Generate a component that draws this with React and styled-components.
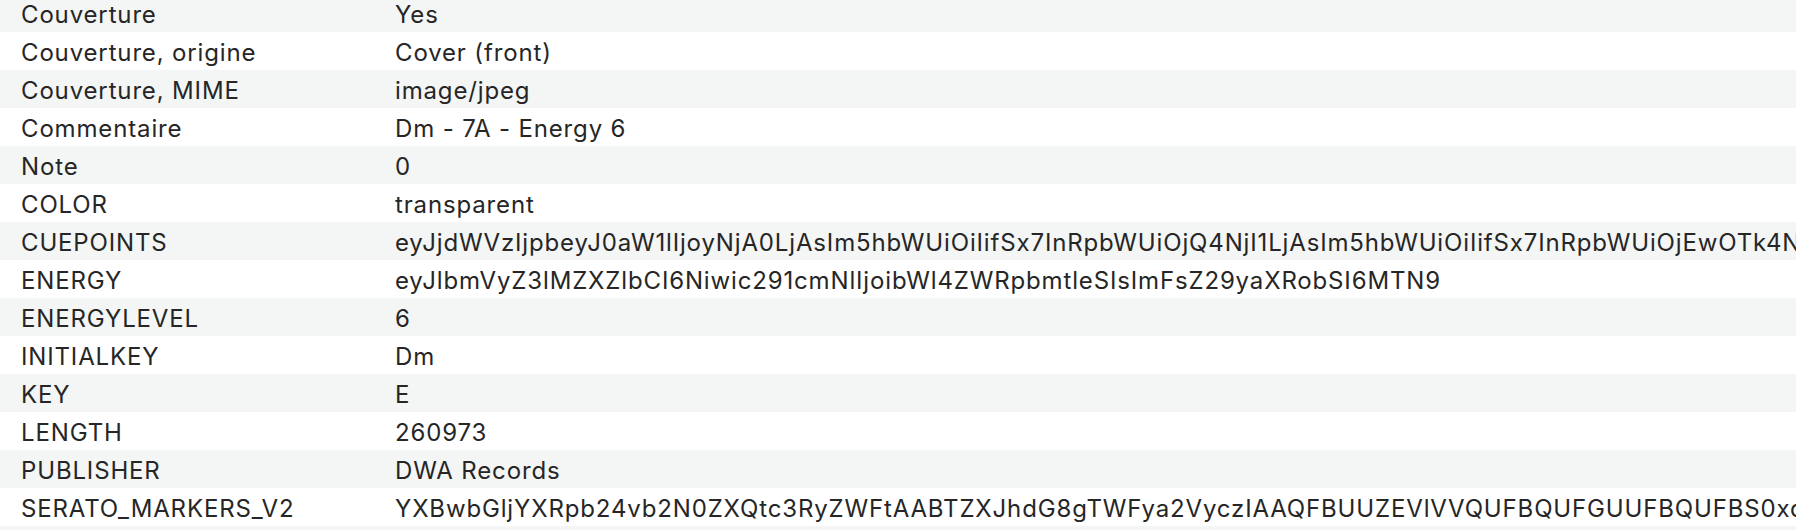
import React from 'react';
import styled, { createGlobalStyle } from 'styled-components';

const GlobalStyle = createGlobalStyle`
  html, body {
    margin: 0;
    padding: 0;
    background: #ffffff;
    overflow: hidden;
  }
`;

const Table = styled.div`
  display: flex;
  flex-direction: column;
  margin-top: -6px;
  width: 100%;
  font-family: Inter, "Noto Sans", sans-serif;
  font-size: 24px;
  letter-spacing: 0.85px;
  color: #262626;
`;

const Row = styled.div`
  box-sizing: border-box;
  display: grid;
  grid-template-columns: 374px 1fr;
  align-items: center;
  height: 38px;
  padding: 3px 0 0 21px;
  background: ${(props) => (props.$striped ? '#f4f5f5' : '#ffffff')};
  white-space: nowrap;
  overflow: hidden;
`;

const Label = styled.span`
  overflow: hidden;
`;

const Value = styled.span`
  overflow: hidden;
`;

const rows = [
  ['Couverture', 'Yes'],
  ['Couverture, origine', 'Cover (front)'],
  ['Couverture, MIME', 'image/jpeg'],
  ['Commentaire', 'Dm - 7A - Energy 6'],
  ['Note', '0'],
  ['COLOR', 'transparent'],
  ['CUEPOINTS', 'eyJjdWVzIjpbeyJ0aW1lIjoyNjA0LjAsIm5hbWUiOiIifSx7InRpbWUiOjQ4NjI1LjAsIm5hbWUiOiIifSx7InRpbWUiOjEwOTk4NS4wLCJuYW1lIjoiIn1dfQ=='],
  ['ENERGY', 'eyJlbmVyZ3lMZXZlbCI6Niwic291cmNlIjoibWl4ZWRpbmtleSIsImFsZ29yaXRobSI6MTN9'],
  ['ENERGYLEVEL', '6'],
  ['INITIALKEY', 'Dm'],
  ['KEY', 'E'],
  ['LENGTH', '260973'],
  ['PUBLISHER', 'DWA Records'],
  ['SERATO_MARKERS_V2', 'YXBwbGljYXRpb24vb2N0ZXQtc3RyZWFtAABTZXJhdG8gTWFya2VyczIAAQFBUUZEVlVVQUFBQUFGUUFBQUFBS0xqQUFBQUFB'],
  ['', ''],
];

const App = () => (
  <>
    <GlobalStyle />
    <Table>
      {rows.map(([label, value], i) => (
        <Row key={i} $striped={i % 2 === 0}>
          <Label>{label}</Label>
          <Value>{value}</Value>
        </Row>
      ))}
    </Table>
  </>
);

export default App;
